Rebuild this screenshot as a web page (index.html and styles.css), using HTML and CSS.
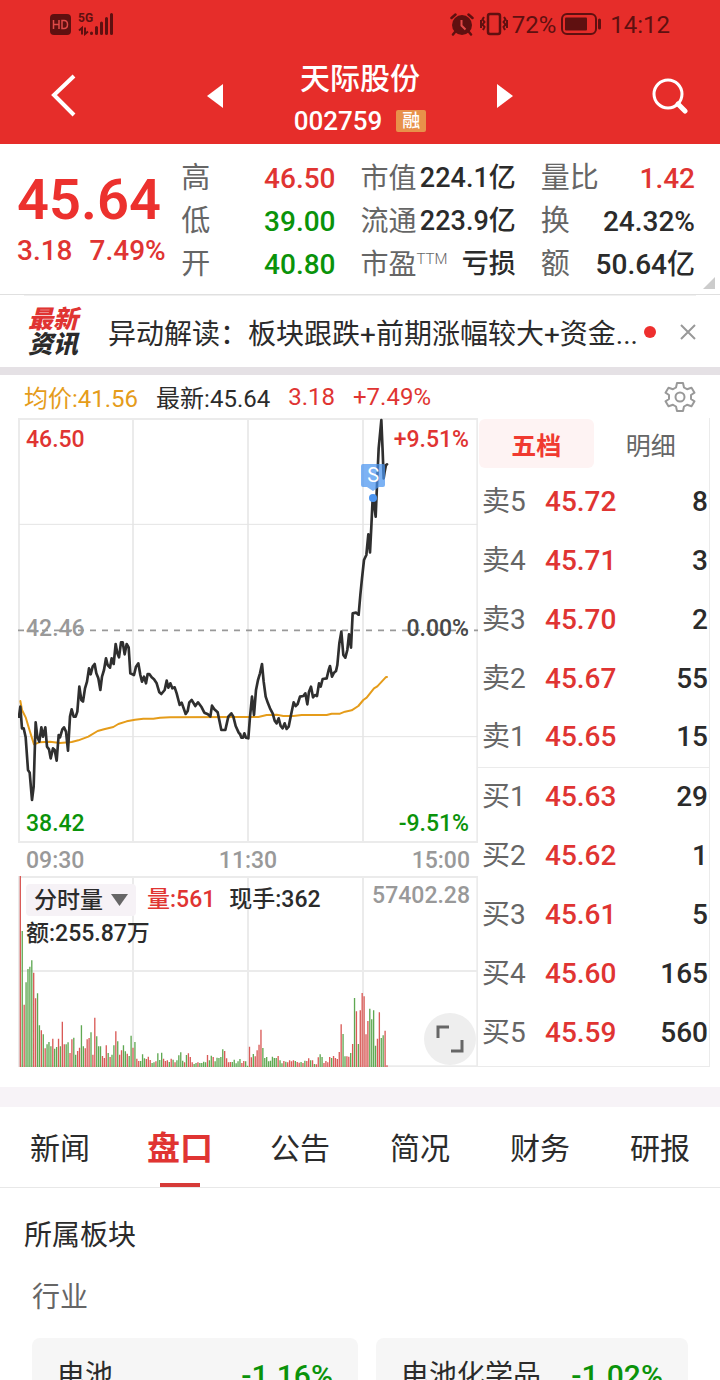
FILE: index.html
```html
<!DOCTYPE html>
<html lang="zh-CN">
<head>
<meta charset="utf-8">
<meta name="viewport" content="width=device-width, initial-scale=1">
<title>天际股份 002759</title>
<link rel="stylesheet" href="styles.css">
</head>
<body>
<header class="top">
  <div class="status">
    <div class="status-side">
      <svg width="21" height="21" viewBox="0 0 21 21"><rect width="21" height="21" rx="4" fill="#5f1010"/><path d="M3.500 6v9M9 6v9M3.500 10.500h5.500M12 6.500v8h2q3.500 0 3.500-4t-3.500-4z" fill="none" stroke="#e04a48" stroke-width="1.500"/></svg>
      <div class="signal">
        <span class="net">5G</span>
        <svg width="36" height="24" viewBox="0 0 36 24"><g fill="none" stroke="#5f1010" stroke-width="3" stroke-linecap="round"><path d="M13.500 21.500v-.5M18.500 21.500v-6M23.500 21.500v-10.500M28.500 21.500v-15M33.500 21.500v-19"/></g><path d="M1 18.500L4 16v6.500M7 15.500V22l3-2.500" fill="none" stroke="#5f1010" stroke-width="2"/></svg>
      </div>
    </div>
    <div class="status-side">
      <svg width="24" height="24" viewBox="0 0 24 24"><circle cx="12" cy="13" r="10" fill="#5f1010"/><path d="M1.500 6l4-3.500M22.500 6l-4-3.500M5 20l-2 2.500M19 20l2 2.500" stroke="#5f1010" stroke-width="2.500" stroke-linecap="round"/><path d="M11.500 8v5.500l4 4" fill="none" stroke="#e04a48" stroke-width="2"/></svg>
      <svg class="vibrate" width="28" height="24" viewBox="0 0 28 24"><g fill="none" stroke="#5f1010" stroke-width="2"><rect x="8" y="2" width="12" height="20" rx="2" stroke-width="2.500"/><path d="M4 5L2.500 7.500l2 2.500-2 2.500 2 2.500-1.500 3M1 8v8M24 5l1.500 2.500-2 2.500 2 2.500-2 2.500 1.500 3M27 8v8"/></g></svg>
      <span>72%</span>
      <svg class="battery" width="41" height="22" viewBox="0 0 41 22"><rect x="1" y="1" width="34" height="20" rx="5" fill="none" stroke="#5f1010" stroke-width="2"/><rect x="4" y="4.500" width="22" height="13" rx="1" fill="#5f1010"/><path d="M38.500 7v8" stroke="#5f1010" stroke-width="3" stroke-linecap="round"/></svg>
      <span>14:12</span>
    </div>
  </div>
  <nav class="nav">
    <button class="icon-btn nav-start" aria-label="返回"><svg width="26" height="44" viewBox="0 0 26 44"><path d="M24 2L4 21l20 20" fill="none" stroke="#fff" stroke-width="4"/></svg></button>
    <div class="nav-mid">
      <button class="icon-btn" aria-label="上一只"><svg width="16" height="24"><path d="M16 0v24L0 12z" fill="#fff"/></svg></button>
      <div class="stock">
        <h1>天际股份</h1>
        <div class="code">002759 <span class="badge">融</span></div>
      </div>
      <button class="icon-btn" aria-label="下一只"><svg width="16" height="24"><path d="M0 0v24L16 12z" fill="#fff"/></svg></button>
    </div>
    <button class="icon-btn nav-end" aria-label="搜索"><svg width="36" height="36" viewBox="0 0 36 36"><circle cx="16" cy="16" r="14" fill="none" stroke="#fff" stroke-width="3"/><path d="M26 26l7 7" stroke="#fff" stroke-width="5" stroke-linecap="round"/></svg></button>
  </nav>
</header>

<section class="quote">
  <div class="last up">
    <div class="price">45.64</div>
    <div class="change"><span>3.18</span><span>7.49%</span></div>
  </div>
  <dl class="stats">
    <div><dt>高</dt><dd class="up">46.50</dd></div>
    <div><dt>低</dt><dd class="down">39.00</dd></div>
    <div><dt>开</dt><dd class="down">40.80</dd></div>
  </dl>
  <dl class="stats stats-tight">
    <div><dt>市值</dt><dd>224.1亿</dd></div>
    <div><dt>流通</dt><dd>223.9亿</dd></div>
    <div><dt>市盈<span class="ttm">TTM</span></dt><dd>亏损</dd></div>
  </dl>
  <dl class="stats">
    <div><dt>量比</dt><dd class="up">1.42</dd></div>
    <div><dt>换</dt><dd>24.32%</dd></div>
    <div><dt>额</dt><dd>50.64亿</dd></div>
  </dl>
  <svg class="corner" width="12" height="12"><path d="M12 0v12H0z" fill="#ccc"/></svg>
</section>

<section class="news">
  <div class="news-logo"><span class="red">最新</span><span>资讯</span></div>
  <a class="news-text" href="#news">异动解读：板块跟跌+前期涨幅较大+资金...</a>
  <span class="dot"></span>
  <button class="icon-btn close" aria-label="关闭"><svg width="16" height="16"><path d="M1 1l14 14M15 1L1 15" stroke="#999" stroke-width="2"/></svg></button>
</section>

<section class="trade">
  <div class="summary">
    <span class="avg">均价:41.56</span><span>最新:45.64</span><span class="up">3.18</span><span class="up">+7.49%</span>
    <button class="icon-btn gear" aria-label="设置"><svg width="32" height="32" viewBox="0 0 32 32"><path d="M13 2h6l1 4.500 3 1.700 4.500-1.500 3 5-3.500 2.300v4l3.500 2.300-3 5-4.500-1.500-3 1.700-1 4.500h-6l-1-4.500-3-1.700-4.500 1.500-3-5L5 18v-4l-3.500-2.300 3-5L9 8.200l3-1.700z" fill="none" stroke="#999" stroke-width="2" stroke-linejoin="round"/><circle cx="16" cy="16" r="4.500" fill="none" stroke="#999" stroke-width="2"/></svg></button>
  </div>
  <div class="board">
    <div class="chart">
      <div class="panel price-panel">
        <svg class="plot" viewBox="54 0 1380 1275" preserveAspectRatio="none">
          <path class="grid" d="M57 3H1432V1272H57zM399 0V1275M744 0V1275M1089 0V1275"/>
          <path class="grid thin" d="M57 319H1432M57 956H1432"/>
          <path class="zero" d="M54 637H1434"/>
          <g class="line avg-line">
            <polyline transform="translate(0 606)" points="61,243 66,270 77,292 90,335 102,373 118,367 150,365 180,369 215,366 235,361 265,350 293,333 312,328 340,321 355,312 380,304 405,299 430,296 460,296 480,293 510,292 720,291"/>
            <polyline transform="translate(720 546)" points="0,351 55,351 80,345 110,344 130,348 160,348 185,345 260,345 275,341 300,341 315,335 335,331 355,318 370,300 380,293 402,265 412,259 437,232 441,231"/>
          </g>
          <g class="line price-line">
            <polyline transform="translate(0 606)" points="57,290 61,260 66,325 71,325 77,352 84,450 89,458 96,540 101,500 104,400 107,307 112,350 118,365 124,322 129,350 136,322 141,380 147,388 152,415 159,385 164,390 170,422 176,345 180,352 187,328 192,322 198,335 204,392 210,290 215,268 221,290 227,290 232,275 238,200 244,240 249,245 255,205 261,185 267,145 272,163 278,140 284,132 289,160 295,175 301,210 306,170 312,150 318,115 323,135 330,143 335,115 341,132 347,72 352,100 357,112 363,67 368,67 374,103 380,72 386,82 391,160 402,165 408,140 415,130 421,165 426,185 432,170 438,190 443,162 448,162 455,172 462,178 470,190 478,217 484,222 494,210 500,182 505,203 511,190 517,205 524,202 530,220 539,255 545,248 557,282 563,273 568,247 575,240 586,258 594,247 605,262 613,278 624,283 631,290 636,257 643,268 653,277 664,330 676,330 685,290 694,280 700,290 707,318 716,338 720,342"/>
            <polyline transform="translate(720 546)" points="0,402 4,413 9,413 13,400 18,413 25,415 30,350 36,290 42,345 48,270 54,240 60,220 66,192 71,245 77,290 84,310 90,325 98,340 104,362 110,370 116,355 122,378 128,385 134,370 140,387 146,380 153,345 161,307 167,318 173,312 180,290 190,288 196,280 202,313 207,275 213,260 219,292 225,285 231,288 237,250 242,260 248,237 260,235 266,210 270,198 276,230 282,218 288,213 292,195 298,130 304,95 310,165 316,173 322,150 327,103 333,143 338,40 348,38 356,44"/>
            <polyline transform="translate(720 -129)" points="356,718 361,660 366,610 372,555 379,540 385,478 390,532 394,455 398,370 402,385 407,425 411,330 416,220 424,135 428,230 431,310 434,290 438,270 441,268"/>
          </g>
        </svg>
        <span class="mark">S</span>
        <span class="tag up tl">46.50</span>
        <span class="tag up tr">+9.51%</span>
        <span class="tag muted ml">42.46</span>
        <span class="tag zero-tag mr">0.00%</span>
        <span class="tag down bl">38.42</span>
        <span class="tag down br">-9.51%</span>
      </div>
      <div class="axis"><span>09:30</span><span>11:30</span><span>15:00</span></div>
      <div class="panel volume-panel">
        <svg class="plot" viewBox="54 0 1380 573" preserveAspectRatio="none">
          <path class="grid" d="M57 3H1432V571H57zM57 285H1432M399 0V573M744 0V573M1089 0V573"/>
          <path id="vol-up" fill="#d95a57"/>
          <path id="vol-down" fill="#5fa852"/>
        </svg>
        <div class="vol-info">
          <label class="picker"><select aria-label="指标"><option>分时量</option></select><svg width="17" height="12"><path d="M0 0h17L8.500 12z" fill="#666"/></svg></label>
          <span class="up">量:561</span><span>现手:362</span>
          <span class="vol-max">57402.28</span>
        </div>
        <div class="vol-amount">额:255.87万</div>
        <button class="icon-btn full" aria-label="全屏"><svg width="28" height="28" viewBox="0 0 28 28"><path d="M2 13V2h11M26 15v11H15" fill="none" stroke="#666" stroke-width="3"/></svg></button>
      </div>
    </div>
    <div class="book">
      <div class="book-tabs"><button class="on">五档</button><button>明细</button></div>
      <table>
        <tbody>
          <tr><th>卖5</th><td class="up">45.72</td><td>8</td></tr>
          <tr><th>卖4</th><td class="up">45.71</td><td>3</td></tr>
          <tr><th>卖3</th><td class="up">45.70</td><td>2</td></tr>
          <tr><th>卖2</th><td class="up">45.67</td><td>55</td></tr>
          <tr><th>卖1</th><td class="up">45.65</td><td>15</td></tr>
        </tbody>
        <tbody class="bids">
          <tr><th>买1</th><td class="up">45.63</td><td>29</td></tr>
          <tr><th>买2</th><td class="up">45.62</td><td>1</td></tr>
          <tr><th>买3</th><td class="up">45.61</td><td>5</td></tr>
          <tr><th>买4</th><td class="up">45.60</td><td>165</td></tr>
          <tr><th>买5</th><td class="up">45.59</td><td>560</td></tr>
        </tbody>
      </table>
    </div>
  </div>
</section>

<nav class="tabs">
  <a href="#news">新闻</a><a class="on" href="#board">盘口</a><a href="#notice">公告</a><a href="#brief">简况</a><a href="#finance">财务</a><a href="#research">研报</a>
</nav>

<section class="sector">
  <h2>所属板块</h2>
  <h3>行业</h3>
  <div class="cards">
    <a class="card" href="#battery">电池<span class="down">-1.16%</span></a>
    <a class="card" href="#chemical">电池化学品<span class="down">-1.02%</span></a>
  </div>
</section>
<script src="volume.js"></script>
</body>
</html>
```

FILE: styles.css
```css
* { box-sizing: border-box; }
body {
  margin: 0;
  height: 100vh;
  overflow: hidden;
  background: #fff;
  color: #2b2b2b;
  font-family: Roboto, "Noto Sans CJK SC", sans-serif;
  font-size: 28px;
}
h1, h2, h3, dl, dd { margin: 0; font-weight: 400; }
a { color: inherit; text-decoration: none; }
svg { display: block; flex: none; }
button { border: 0; padding: 0; background: none; color: inherit; font: inherit; }
.icon-btn { display: flex; align-items: center; justify-content: center; }
.up { color: #e03432; }
.down { color: #0a930a; }
.muted { color: #999; }

.top { background: #e62d2a; color: #fff; }
.status {
  display: flex;
  justify-content: space-between;
  height: 48px;
  padding: 0 50px;
  color: #5f1010;
  font-size: 24px;
}
.status-side { display: flex; align-items: center; }
.status-side > span { padding-top: 2px; }
.signal { position: relative; margin-left: 7px; }
.net { position: absolute; left: 0; top: 0; font-size: 12px; line-height: 12px; font-weight: 700; }
.vibrate { margin: 0 4px 0 6px; }
.battery { margin: 0 8px 0 5px; }
.nav {
  display: grid;
  grid-template-columns: minmax(0, 1fr) 306px minmax(0, 1fr);
  height: 96px;
  padding: 0 32px;
}
.nav-start { justify-self: start; margin-left: 18px; }
.nav-end { justify-self: end; }
.nav-mid { display: flex; align-items: center; justify-content: space-between; }
.stock { padding-top: 8px; text-align: center; }
.stock h1 { font-size: 30px; line-height: 42px; font-weight: 500; }
.code { display: flex; align-items: center; gap: 14px; font-size: 26px; line-height: 42px; font-weight: 500; }
.badge { padding: 0 6px; border-radius: 2px; background: #e8914a; font-size: 18px; line-height: 22px; }

.quote {
  position: relative;
  display: grid;
  grid-template-columns: minmax(0, 139fr) minmax(0, 154fr) minmax(0, 155fr) minmax(0, 154fr);
  gap: 25px;
  padding: 13px 25px 8px 17px;
  border-bottom: 1px solid #e0e0e0;
}
.price { font-size: 56px; line-height: 86px; font-weight: 600; color: #ec312e; }
.change { display: flex; gap: 17px; line-height: 16px; white-space: nowrap; }
.change, .stats dd { font-weight: 500; }
.stats > div { display: flex; justify-content: space-between; align-items: center; height: 43px; line-height: 43px; white-space: nowrap; }
.stats dt { color: #666; font-size: 29px; }
.stats .ttm { font-size: 15px; line-height: 32px; font-weight: 300; }
.stats-tight dt { display: flex; font-size: 28px; }
.stats-tight dd { font-size: 27px; }
.corner { position: absolute; right: 5px; bottom: 5px; }

.news { display: flex; align-items: center; height: 72px; margin: 0 24px; padding-left: 4px; border-top: 1px solid #f0f0f0; }
.news-logo { width: 80px; font-size: 25px; line-height: 25px; font-weight: 900; font-style: italic; }
.news-logo span { display: block; }
.news-logo .red { color: #e03432; }
.news-text { overflow: hidden; white-space: nowrap; }
.dot { flex: none; width: 12px; height: 12px; margin-left: 6px; border-radius: 50%; background: #ee2f2e; }
.close { margin-left: auto; }

.trade { padding: 0 10px 20px 18px; border-top: 8px solid #e5e1e5; border-bottom: 20px solid #f7f3f7; }
.summary { display: flex; align-items: center; gap: 18px; height: 43px; padding: 0 14px 0 6px; font-size: 24px; }
.avg { color: #e59c1a; }
.gear { margin-left: auto; }
.board { display: grid; grid-template-columns: 460fr 232fr; }
.panel { position: relative; }
.price-panel { height: 425px; }
.volume-panel { height: 191px; }
.plot { position: absolute; inset: 0; width: 100%; height: 100%; }
.grid { fill: none; stroke: #ebebeb; stroke-width: 6; }
.thin { stroke: #e4e4e4; stroke-width: 3; }
.zero { stroke: #999; stroke-width: 5; stroke-dasharray: 18 18; }
.line { fill: none; stroke-width: 8; stroke-linejoin: round; stroke-linecap: round; }
.avg-line { stroke: #e59c1a; stroke-width: 6; }
.price-line { stroke: #2f2f2f; }
.tag { position: absolute; font-size: 23px; line-height: 24px; font-weight: 500; }
.zero-tag { color: #484848; }
.tl { left: 8px; top: 10px; }
.tr { right: 9px; top: 10px; }
.ml { left: 8px; top: 199px; }
.mr { right: 9px; top: 199px; }
.bl { left: 8px; bottom: 7px; }
.br { right: 9px; bottom: 7px; }
.mark {
  position: absolute;
  left: 77%;
  top: 46px;
  width: 24px;
  margin-left: -11px;
  border-radius: 2px;
  background: rgba(74, 148, 240, .72);
  color: #fff;
  font-size: 20px;
  line-height: 23px;
  text-align: center;
}
.mark::before { content: ""; position: absolute; left: 6px; top: 23px; border: 6px solid transparent; border-top: 4px solid rgba(74, 148, 240, .72); }
.mark::after { content: ""; position: absolute; left: 8px; top: 30px; width: 8px; height: 8px; border-radius: 50%; background: #4a94f0; }
.axis { display: flex; justify-content: space-between; height: 33px; padding: 1px 8px 0; color: #999; font-size: 23px; line-height: 33px; font-weight: 500; }
.vol-info { position: relative; display: flex; align-items: center; gap: 14px; padding: 7px 8px 0; }
.vol-info, .vol-amount { font-size: 23px; line-height: 34px; font-weight: 500; }
.picker { display: flex; align-items: center; gap: 8px; padding: 0 8px; border-radius: 4px; background: #f6f2f6; }
.picker select { appearance: none; height: 32px; border: 0; padding: 0; background: none; color: inherit; font: inherit; }
.vol-info .picker { margin-right: -3px; }
.vol-max { margin-left: auto; align-self: flex-start; color: #999; line-height: 26px; }
.vol-amount { position: relative; padding-left: 8px; }
.full { position: absolute; right: 2px; bottom: 2px; width: 52px; height: 52px; border-radius: 50%; background: #eee; }

.book { border-right: 1px solid #ebebeb; border-bottom: 1px solid #ebebeb; }
.book-tabs { display: grid; grid-template-columns: 1fr 1fr; height: 54px; padding: 1px 1px 4px; font-size: 25px; }
.book-tabs button { color: #666; }
.book-tabs .on { border-radius: 6px; background: #fef3f3; color: #f03a30; font-weight: 700; }
table { width: 100%; border-collapse: collapse; }
th, td { height: 59px; padding: 0 0 0 4px; text-align: left; font-weight: 500; line-height: 40px; }
th { width: 67px; color: #666; font-weight: 400; }
td.up { padding: 0; }
td:last-child { padding: 0 1px 0 0; text-align: right; }
.bids { border-top: 1px solid #ebebeb; }

.tabs { display: grid; grid-template-columns: repeat(6, 1fr); padding-top: 4px; border-bottom: 1px solid #e8e8e8; font-size: 30px; line-height: 76px; text-align: center; }
.tabs a { height: 76px; }
.tabs .on { position: relative; color: #e03432; font-size: 33px; font-weight: 700; }
.tabs .on::after { content: ""; position: absolute; left: 50%; bottom: 0; width: 40px; height: 4px; margin-left: -20px; background: #d63a38; }

.sector { padding: 28px 32px 0; }
.sector h2 { margin-left: -8px; font-size: 28px; line-height: 40px; }
.sector h3 { margin: 22px 0 20px; color: #666; font-size: 28px; line-height: 40px; }
.cards { display: grid; grid-template-columns: 326fr 312fr; gap: 18px; }
.card { display: flex; justify-content: space-between; padding: 18px 25px; border-radius: 8px; background: #f6f6f6; line-height: 40px; }
.card .down { font-size: 30px; font-weight: 500; }
```

FILE: volume.js
```js
// One entry per trading minute: bar height followed by u (up) or d (down).
const bars = (
  "573u 408d 187u 254d 294d 301d 320d 283u 206u 221d 125d 110u 98d 56u 68d 75d 62d 85u 55d 60d 85u 62d 136u 68u 68d 74d 42u 83u 88d 37d " +
  "48u 58u 125d 62d 56u 83u 87u 104d 37u 148u 92d 62d 62d 33u 27u 65u 42d 30u 37d 65d 107u 77d 37u 50u 65d 47d 40u 33d 94d 58u " +
  "75d 25u 18u 18d 38d 26d 24u 31u 21u 12d 14d 17u 41d 21d 43d 25u 18u 20u 15d 25u 22d 14u 20d 35d 44d 19d 14u 36d 41u 30u " +
  "14u 9d 12d 14u 12d 12d 16d 14d 36u 20d 34d 30u 17d 28d 27d 30d 53d 48u 26u 14u 15u 15d 22d 11d 17d " +
  "24d 12u 18u 17d 4d 61u 29u 39d 32u 50u 67u 112u 57d 27d 30d 17d 19d 31d 27d 27d 33u 20d 11d 18u 16d 14u 20u 17u 20u 18d " +
  "15u 13u 15d 12u 19d 18u 26u 20d 20u 9d 8u 29u 38d 30d 12u 18u 14u 30u 27d 33u 27u 24u 45u 128u 99d 32d 32u 31u 42d 69u " +
  "207d 167u 69d 170u 222u 212u 98u 138u 175d 143d 170d 64d 85u 164u 87d 95d 109u 5u"
).split(" ");

const base = 573;
const step = (1161 - 61) / (bars.length - 1);
const paths = { u: "", d: "" };
bars.forEach((bar, i) => {
  const height = parseInt(bar, 10);
  const x = (59 + i * step).toFixed(1);
  paths[bar.slice(-1)] += `M${x} ${base}v${-height}h4v${height}z`;
});
document.getElementById("vol-up").setAttribute("d", paths.u);
document.getElementById("vol-down").setAttribute("d", paths.d);
```
